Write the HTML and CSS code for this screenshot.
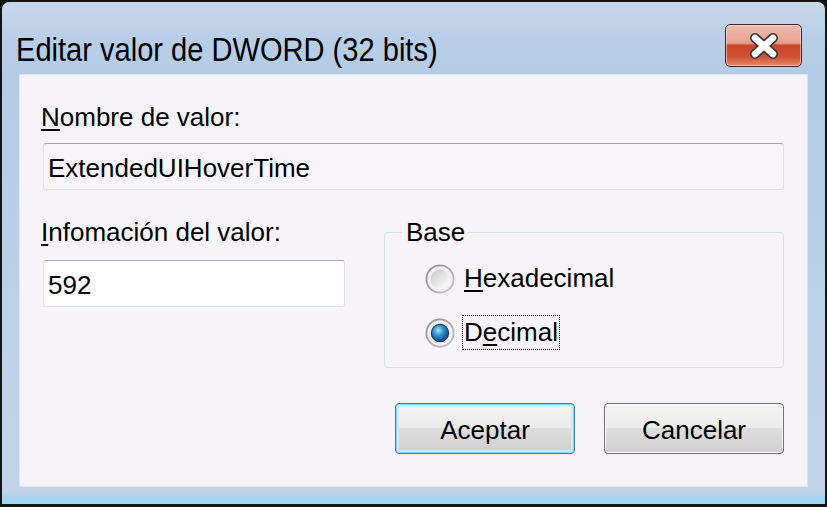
FILE: index.html
```html
<!DOCTYPE html>
<html lang="es">
<head>
<meta charset="utf-8">
<title>Editar valor de DWORD (32 bits)</title>
<link rel="stylesheet" href="styles.css">
</head>
<body>
<div class="window">
  <div class="titlebar">
    <div class="title">Editar valor de DWORD (32 bits)</div>
    <div class="close">
      <svg width="34" height="26" viewBox="0 0 34 26">
        <path d="M8 5 L26 21 M26 5 L8 21" stroke="#3a3a3a" stroke-width="10" stroke-linecap="round"/>
        <path d="M8 5 L26 21 M26 5 L8 21" stroke="#ffffff" stroke-width="6.5" stroke-linecap="round"/>
      </svg>
    </div>
  </div>
  <div class="client">
    <div class="label"><u>N</u>ombre de valor:</div>
    <div class="textbox readonly">ExtendedUIHoverTime</div>
    <div class="row">
      <div class="col">
        <div class="label"><u>I</u>nfomación del valor:</div>
        <div class="textbox">592</div>
      </div>
      <fieldset class="group">
        <legend class="legend">Base</legend>
        <div class="radios">
          <div class="radio">
            <svg width="30" height="30" viewBox="0 0 30 30">
              <defs>
                <linearGradient id="ringA" x1="0" y1="0" x2="1" y2="1">
                  <stop offset="0" stop-color="#8c8c8c"/>
                  <stop offset="1" stop-color="#c6c6c6"/>
                </linearGradient>
                <linearGradient id="innerA" x1="0" y1="0" x2="1" y2="1">
                  <stop offset="0" stop-color="#c9c9c9"/>
                  <stop offset="1" stop-color="#ffffff"/>
                </linearGradient>
              </defs>
              <circle cx="15" cy="15" r="13.6" fill="#f1f1f1" stroke="url(#ringA)" stroke-width="1.8"/>
              <circle cx="15" cy="15" r="9.5" fill="url(#innerA)"/>
            </svg>
            <span class="rlabel"><u>H</u>exadecimal</span>
          </div>
          <div class="radio">
            <svg width="30" height="30" viewBox="0 0 30 30">
              <defs>
                <linearGradient id="ringB" x1="0" y1="0" x2="1" y2="1">
                  <stop offset="0" stop-color="#8c8c8c"/>
                  <stop offset="1" stop-color="#c6c6c6"/>
                </linearGradient>
                <radialGradient id="dotB" cx="0.4" cy="0.35" r="0.65">
                  <stop offset="0" stop-color="#a6e4fb"/>
                  <stop offset="0.45" stop-color="#2f95d2"/>
                  <stop offset="1" stop-color="#0b4a80"/>
                </radialGradient>
              </defs>
              <circle cx="15" cy="15" r="13.6" fill="#f1f1f1" stroke="url(#ringB)" stroke-width="1.8"/>
              <circle cx="15" cy="15" r="8.6" fill="url(#dotB)" stroke="#1b3f63" stroke-width="1.2"/>
            </svg>
            <span class="rlabel focus">D<u>e</u>cimal</span>
          </div>
        </div>
      </fieldset>
    </div>
    <div class="buttons">
      <div class="btn default">Aceptar</div>
      <div class="btn">Cancelar</div>
    </div>
  </div>
</div>
</body>
</html>
```

FILE: styles.css
```css
html, body {
  margin: 0;
  padding: 0;
  background: #101010;
}

body {
  font-family: "Liberation Sans", Arial, sans-serif;
  color: #000;
}

.window {
  box-sizing: border-box;
  width: 827px;
  height: 507px;
  border-style: solid;
  border-color: #141414;
  border-width: 2px 2px 3px 2px;
  border-radius: 9px 9px 0 0;
  background: linear-gradient(to bottom, #c7d8ec 0px, #b8cee7 40px, #b4cbe5 75px, #bdd1e8 300px, #c1d3e8 490px, #a3d5ef 496px, #a3d5ef 502px);
  display: flex;
  flex-direction: column;
  overflow: hidden;
}

.titlebar {
  height: 73px;
  box-sizing: border-box;
  display: flex;
  justify-content: space-between;
  align-items: flex-start;
  padding: 22px 23px 0 14px;
}

.title {
  margin-top: 5px;
  font-family: "Liberation Sans", Arial, sans-serif;
  font-size: 34px;
  line-height: 40px;
  color: #000;
  white-space: nowrap;
  transform: scaleX(0.855);
  transform-origin: left center;
}

.close {
  box-sizing: border-box;
  width: 77px;
  height: 43px;
  border: 1px solid #3c2626;
  border-radius: 5px;
  background: linear-gradient(to bottom, #eebcae 0%, #e6a190 44%, #c8462a 50%, #cf5233 78%, #e58b6a 100%);
  box-shadow: inset 0 0 0 1px rgba(255, 230, 220, 0.55);
  display: flex;
  align-items: center;
  justify-content: center;
}

.client {
  box-sizing: border-box;
  height: 411px;
  margin: 0 18px;
  padding: 27px 23px 32px 23px;
  background: #f6f4f8;
  box-shadow: 0 0 0 1px #dce6f2;
}

.label {
  font-size: 26px;
  line-height: 30px;
  margin-left: -2px;
}

u {
  text-decoration-thickness: 2px;
  text-underline-offset: 3px;
}

.textbox {
  box-sizing: border-box;
  height: 47px;
  margin-top: 11px;
  padding: 3px 4px 0 4px;
  font-size: 26px;
  line-height: 42px;
  background: #ffffff;
  border: 1px solid #dde2e9;
  border-top-color: #a9abb0;
  border-radius: 3px;
}

.textbox.readonly {
  background: #f7f5f9;
  border-color: #e1e1e6;
  border-top-color: #a4a4a4;
}

.row {
  display: grid;
  grid-template-columns: 302px 1fr;
  column-gap: 39px;
  margin-top: 27px;
  align-items: start;
}

.col .textbox {
  margin-top: 13px;
}

.group {
  margin: 0;
  padding: 0;
  min-width: 0;
  border: 1px solid #d6dfe6;
  border-radius: 4px;
}

.legend {
  margin-left: 17px;
  padding: 0 3px 0 4px;
  font-size: 26px;
  line-height: 30px;
}

.radios {
  display: flex;
  flex-direction: column;
  gap: 19px;
  padding: 14px 0 17px 40px;
}

.radio {
  display: flex;
  align-items: center;
  gap: 7px;
  height: 35px;
}

.radio svg {
  flex: none;
}

.rlabel {
  font-size: 26px;
  line-height: 33px;
  padding: 0 1px;
  border: 1px dotted transparent;
}

.rlabel.focus {
  border-color: #000;
}

.buttons {
  display: flex;
  justify-content: flex-end;
  gap: 29px;
  margin-top: 35px;
}

.btn {
  box-sizing: border-box;
  width: 180px;
  height: 51px;
  padding-top: 3px;
  border: 1px solid #707070;
  border-radius: 4px;
  background: linear-gradient(to bottom, #f3f3f3 0%, #ececec 49%, #dedede 50%, #d0d0d0 100%);
  box-shadow: inset 0 0 0 1px #fbfbfb;
  display: flex;
  align-items: center;
  justify-content: center;
  font-size: 26px;
  line-height: 30px;
}

.btn.default {
  border-color: #3b7fb4;
  box-shadow: inset 0 0 0 1px #8ed6f4, inset 0 0 0 3px #c9ecfa;
}
```
